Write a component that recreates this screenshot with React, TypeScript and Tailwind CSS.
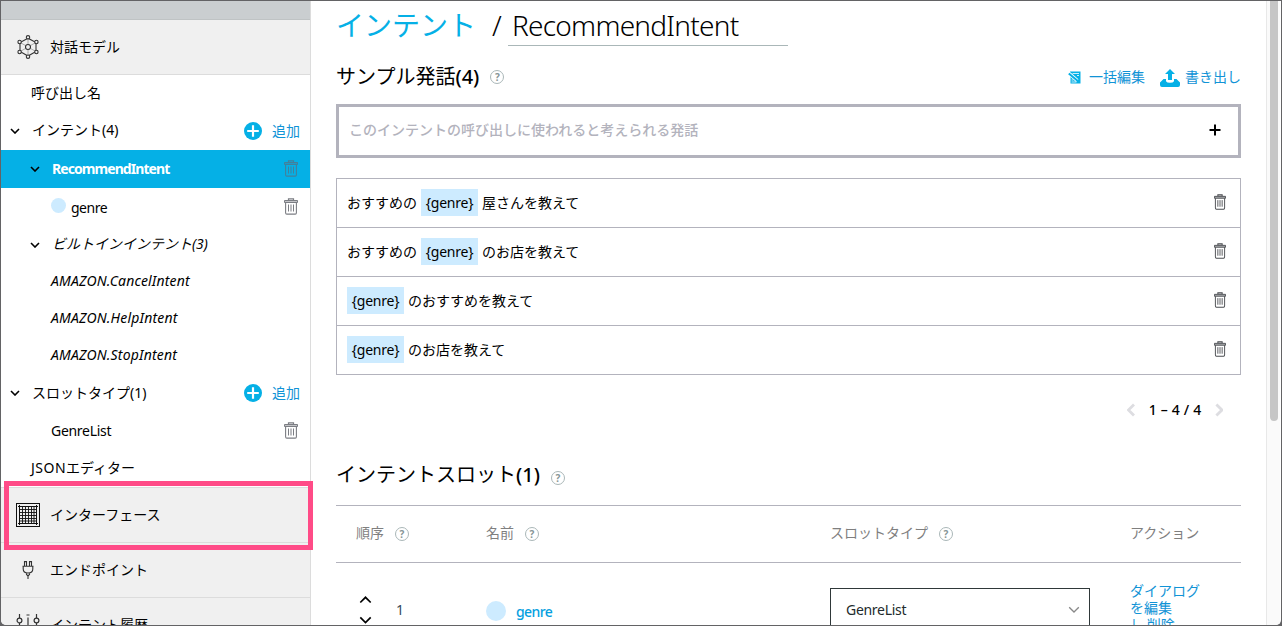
import React from "react";

const INK = "#000000";

function Chevron({ dir = "down", w = 10, color = INK, sw = 1.6 }: { dir?: "down" | "up" | "left" | "right"; w?: number; color?: string; sw?: number }) {
  const vertical = dir === "left" || dir === "right";
  const d = {
    down: "M1 1L5 5L9 1",
    up: "M1 5L5 1L9 5",
    left: "M5 1L1 5L5 9",
    right: "M1 1L5 5L1 9",
  }[dir];
  const h = w * 0.6;
  return (
    <svg className="shrink-0" width={vertical ? h : w} height={vertical ? w : h} viewBox={vertical ? "0 0 6 10" : "0 0 10 6"} fill="none" stroke={color} strokeWidth={sw}>
      <path d={d} />
    </svg>
  );
}

function Trash({ w = 14, h = 17, color = "#7b7d83" }: { w?: number; h?: number; color?: string }) {
  return (
    <svg className="mb-px shrink-0" width={w} height={h} viewBox="0 0 14 17" preserveAspectRatio="none" fill="none" stroke={color}>
      <path d="M4.5 2.2V.9h5v1.3" strokeWidth="1.2" />
      <path d="M.5 2.5h13v2H.5z" strokeWidth="1" fill={color} fillOpacity=".45" />
      <path d="M1.6 4.5v10.2q0 1.4 1.2 1.4h8.4q1.2 0 1.2-1.4V4.5" strokeWidth="1.1" />
      <path d="M4.5 6.5v7M7 6.5v7M9.5 6.5v7" strokeWidth="1" />
    </svg>
  );
}

function Help() {
  return (
    <span className="flex h-[14px] w-[14px] shrink-0 items-center justify-center rounded-full border border-[#aab7b8] text-[10px] leading-none font-bold text-[#879596]">
      ?
    </span>
  );
}

function AddButton() {
  return (
    <span className="ml-auto flex items-center pr-[10px] text-[#1193d6]">
      <svg className="mr-[10px]" width="18" height="18" viewBox="0 0 18 18">
        <circle cx="9" cy="9" r="9" fill="#05b0e6" />
        <path d="M9 3.200v11.600M3.200 9h11.600" stroke="#fff" strokeWidth="2.200" />
      </svg>
      追加
    </span>
  );
}

function ModelIcon() {
  return (
    <svg className="shrink-0" width="22" height="24" viewBox="0 0 22 24" fill="none" stroke="#333" strokeWidth="1.1">
      <path d="M11 3.2L3 7.5v9L11 21l8-4.500V7.500z" />
      <path d="M11 4v5M11 15v5M4 8l4.500 2.500M18 8l-4.500 2.500M4 16l4.500-2.500M18 16l-4.500-2.500" stroke="#999" strokeWidth=".8" />
      <circle cx="11" cy="12" r="2.500" />
      <g fill="#f0f0f0">
        <circle cx="11" cy="2.300" r="1.700" />
        <circle cx="11" cy="21.700" r="1.700" />
        <circle cx="2.600" cy="7" r="1.700" />
        <circle cx="19.400" cy="7" r="1.700" />
        <circle cx="2.600" cy="17" r="1.700" />
        <circle cx="19.400" cy="17" r="1.700" />
      </g>
    </svg>
  );
}

function GridIcon() {
  return (
    <svg className="shrink-0" width="24" height="24" viewBox="0 0 24 24" fill="none" stroke="#111">
      <rect x=".5" y=".5" width="23" height="23" />
      <path d="M3.500 2v20M20.500 2v20M2 3.500h20M2 20.500h20" />
      <path d="M6.500 3v18M9.500 3v18M12.500 3v18M15.500 3v18M18 3v18M3 6.500h18M3 9.500h18M3 12.500h18M3 15.500h18M3 18h18" strokeWidth=".9" />
    </svg>
  );
}

function PlugIcon() {
  return (
    <svg className="shrink-0" width="12" height="18" viewBox="0 0 12 18" fill="none" stroke="#333" strokeWidth="1.100">
      <path d="M2.500 5V.6h2V5M7.500 5V.6h2V5M.5 5.300h11M1.200 5.500V8q0 4 4.800 4t4.800-4V5.500M4.500 12v1.500L6 15l1.500-1.500V12M6 15v3" />
    </svg>
  );
}

function SlidersIcon() {
  return (
    <svg className="mb-[3px] shrink-0" width="24" height="20" viewBox="0 0 24 20" fill="none" stroke="#333" strokeWidth="1.200">
      <path d="M3.500 0v4M3.500 9v9M12 3.500v9M20.500 0v4M20.500 9v9M10.500 1h3" />
      <circle cx="3.500" cy="6.500" r="2.400" />
      <circle cx="12" cy="14.500" r="2.400" />
      <circle cx="20.500" cy="6.500" r="2.400" />
    </svg>
  );
}

function BulkIcon() {
  return (
    <svg className="mt-px shrink-0" width="13" height="13" viewBox="0 0 13 13" fill="none">
      <path d="M2 .5h10.500v12H2.500V6z" fill="#05b0e6" />
      <path d="M4.500 2.500h6.500M9 4.500h2M3.500 9h2M3.500 11h5" stroke="#fff" strokeWidth=".8" />
      <path d="M1.200 2.700L9.300 9.600" stroke="#fff" strokeWidth="3.600" />
      <path d="M.8 2.400L9.800 10" stroke="#05b0e6" strokeWidth="2" />
    </svg>
  );
}

function ExportIcon() {
  return (
    <svg className="mt-[3px] shrink-0" width="20" height="18" viewBox="0 0 20 18" fill="#05b0e6">
      <path d="M10 0l5 5h-3v6H8V5H5z" />
      <path d="M3.500 10h2.500v2.200q1 1.500 4 1.500t4-1.500V10h2.500l3.500 3.500V16q0 2-2 2H2q-2 0-2-2v-2.500z" />
    </svg>
  );
}

function Chip() {
  return <span className="flex h-[27px] w-[57px] shrink-0 items-center justify-center bg-[#cdebff] pt-px text-[14px] tracking-[-0.25px]">{"{genre}"}</span>;
}

function Utterance({ before, after }: { before?: string; after: string }) {
  return (
    <div className="flex h-[49px] items-center border-b border-[#b3b3bd] pr-[14px] pb-px pl-[10px]">
      {before && <span className="w-[74px]">{before}</span>}
      <Chip />
      <span className="ml-1 flex-1">{after}</span>
      <Trash w={12} h={16} color="#4a4c50" />
    </div>
  );
}

export default function App() {
  return (
    <div className="h-[626px] w-[1282px] overflow-hidden bg-[#636365] p-px font-['Noto_Sans','Noto_Sans_CJK_JP',sans-serif] text-[14px] leading-[20px] text-black">
      <div className="flex h-[624px] overflow-hidden rounded-b-[5px] bg-white">
        <aside className="relative h-[624px] w-[310px] shrink-0 overflow-hidden border-r border-[#dcdcdc] whitespace-nowrap">
          <div className="h-[19px] border-b border-[#bfc3c4] bg-[#caced0]" />
          <div className="flex h-[55px] items-center border-b border-[#dcdcdc] bg-[#f0f0f0] pl-[16px]">
            <ModelIcon />
            <span className="ml-[11px]">対話モデル</span>
          </div>
          <div className="flex h-[37px] items-center pb-[2px] pl-[30px]">呼び出し名</div>
          <div className="flex h-[38px] items-center pl-[9px]">
            <Chevron />
            <span className="ml-3 pb-[2px]">インテント(4)</span>
            <AddButton />
          </div>
          <div className="flex h-[38px] items-center bg-[#05b0e6] pr-[12px] pl-[29px]">
            <Chevron />
            <span className="ml-3 flex-1 font-bold tracking-[-0.93px] text-white">RecommendIntent</span>
            <Trash color="#43809b" />
          </div>
          <div className="flex h-[38px] items-center pr-[12px] pl-[50px]">
            <span className="mb-[3px] h-[15px] w-[15px] rounded-full bg-[#cdebff]" />
            <span className="ml-[5px] flex-1 pt-[2px] tracking-[-0.5px]">genre</span>
            <Trash />
          </div>
          <div className="flex h-[37px] items-center pl-[29px]">
            <Chevron />
            <span className="ml-3 pb-[2px] italic">ビルトインインテント(3)</span>
          </div>
          <div className="flex h-[37px] items-center pb-[2px] pl-[50px] tracking-[0.15px] italic">AMAZON.CancelIntent</div>
          <div className="flex h-[37px] items-center pb-[2px] pl-[50px] tracking-[0.17px] italic">AMAZON.HelpIntent</div>
          <div className="flex h-[37px] items-center pb-[2px] pl-[50px] tracking-[0.17px] italic">AMAZON.StopIntent</div>
          <div className="flex h-[38px] items-center pl-[9px]">
            <Chevron />
            <span className="ml-3 pb-px">スロットタイプ(1)</span>
            <AddButton />
          </div>
          <div className="flex h-[38px] items-center pr-[12px] pl-[50px]">
            <span className="flex-1 tracking-[-0.3px]">GenreList</span>
            <Trash />
          </div>
          <div className="flex h-[37px] items-center pb-px pl-[30px]"><span className="tracking-[0.5px]">JSON</span>エディター</div>
          <div className="flex h-[56px] items-center border-y border-[#dcdcdc] bg-[#f0f0f0] pl-[15px]">
            <GridIcon />
            <span className="ml-[10px]">インターフェース</span>
          </div>
          <div className="flex h-[55px] items-center border-b border-[#dcdcdc] bg-[#f0f0f0] pl-[21px]">
            <PlugIcon />
            <span className="ml-[16px]">エンドポイント</span>
          </div>
          <div className="flex h-[55px] items-center bg-[#f0f0f0] pl-[15px]">
            <SlidersIcon />
            <span className="ml-[10px] pb-[2px]">インテント履歴</span>
          </div>
        </aside>

        <main className="h-[624px] w-[955px] shrink-0 overflow-hidden pr-[25px] pl-[25px] whitespace-nowrap">
          <div className="flex h-[45px] items-center text-[28px] leading-[44px] font-light">
            <span className="w-[156px] pt-[2px] font-normal text-[#05b0e6]">インテント</span>
            <span className="w-[16px] pt-[2px] font-light">/</span>
            <span className="h-[45px] w-[280px] border-b border-[#aab7b8] pt-[2px] pl-1 tracking-[-0.75px]">RecommendIntent</span>
          </div>
          <div className="flex h-[58px] items-center pt-[3px]">
            <h2 className="text-[20px] leading-[30px]">サンプル発話<span className="font-medium">(4)</span></h2>
            <span className="ml-[11px]"><Help /></span>
            <span className="ml-auto flex items-center text-[#1193d6]">
              <BulkIcon />
              <span className="ml-[8px]">一括編集</span>
              <span className="ml-[15px]"><ExportIcon /></span>
              <span className="ml-[5px]">書き出し</span>
            </span>
          </div>
          <div className="flex h-[54px] items-center border-3 border-[#b3b3bd] pr-[17px] pb-[2px] pl-[10px] font-medium text-[#b3b3bd]">
            <span className="flex-1">このインテントの呼び出しに使われると考えられる発話</span>
            <svg width="12" height="12" viewBox="0 0 12 12" stroke="#000" strokeWidth="2">
              <path d="M6 .5v11M.5 6h11" />
            </svg>
          </div>
          <div className="mt-5 border border-b-0 border-[#b3b3bd]">
            <Utterance before="おすすめの" after="屋さんを教えて" />
            <Utterance before="おすすめの" after="のお店を教えて" />
            <Utterance after="のおすすめを教えて" />
            <Utterance after="のお店を教えて" />
          </div>
          <div className="mt-[25px] flex h-5 items-center justify-end pr-[18px] font-medium">
            <Chevron dir="left" w={14} color="#dddde1" sw={2} />
            <span className="w-[79px] text-center tracking-[0.2px]">1 – 4 / 4</span>
            <Chevron dir="right" w={14} color="#dddde1" sw={2} />
          </div>
          <div className="mt-[40px] flex h-[30px] items-center">
            <h2 className="text-[20px] leading-[30px]">インテントスロット<span className="font-medium">(1)</span></h2>
            <span className="mt-[6px] ml-[11px]"><Help /></span>
          </div>
          <div className="mt-[15px] flex h-[58px] items-center border-y border-[#b3b3bd] text-[#7f7f7f]">
            <span className="flex w-[150px] items-center gap-[11px] pl-5"><span className="pb-[2px]">順序</span> <Help /></span>
            <span className="flex w-[344px] items-center gap-[11px]"><span className="pb-[2px]">名前</span> <Help /></span>
            <span className="flex w-[300px] items-center gap-[11px]"><span className="pb-[2px]">スロットタイプ</span> <Help /></span>
            <span className="pb-[2px]">アクション</span>
          </div>
          <div className="flex h-[94px] items-center">
            <span className="flex w-[150px] items-center pl-[23px]">
              <span className="flex flex-col gap-[12px]">
                <Chevron dir="up" w={13} sw={1.3} />
                <Chevron w={13} sw={1.3} />
              </span>
              <span className="ml-[24px] text-[#37475a]">1</span>
            </span>
            <span className="flex w-[344px] items-center pt-[2px] font-medium text-[#05a0e0]">
              <span className="mr-[10px] h-5 w-5 rounded-full bg-[#cdebff]" />
              <span className="pt-[2px] tracking-[-0.6px]">genre</span>
            </span>
            <span className="w-[300px]">
              <span className="flex h-[44px] w-[260px] items-center border border-[#2f3839] pr-[9px] pl-[15px] text-[#222b2c]">
                <span className="flex-1 tracking-[-0.3px]">GenreList</span>
                <Chevron w={12} color="#888" sw={1.1} />
              </span>
            </span>
            <span className="pb-[5px] leading-[17px] text-[#1193d6]">
              ダイアログ<br />を編集<br /><span className="mr-[9px]">|</span>削除
            </span>
          </div>
        </main>
        <div className="flex w-[14px] justify-center border-l border-[#e8e8e8] bg-[#fafafa]">
          <div className="h-[420px] w-2 rounded-b-full bg-[#c6c6c6]" />
        </div>
      </div>
      <div className="pointer-events-none absolute top-[481px] left-[4px] h-[69px] w-[309px] border-5 border-[#ff4b87]" />
    </div>
  );
}
